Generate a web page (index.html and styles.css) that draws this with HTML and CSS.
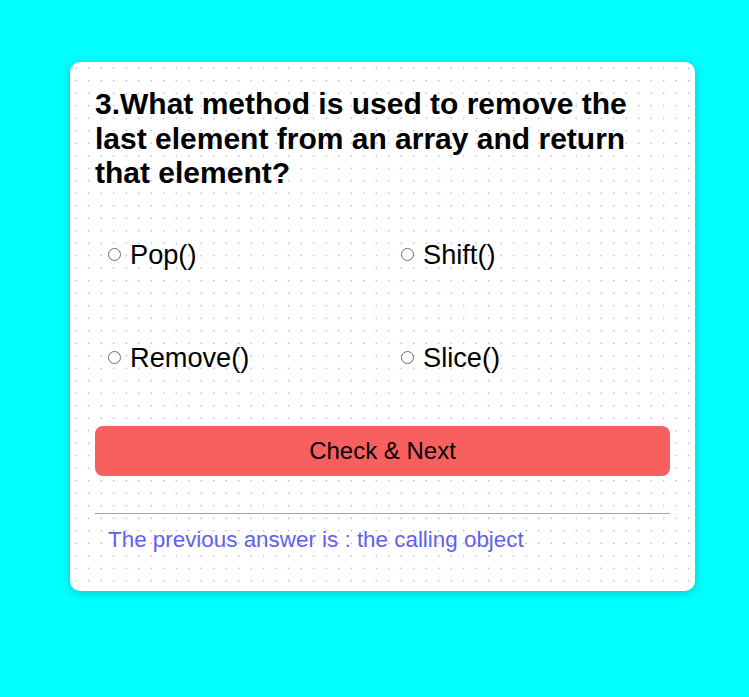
FILE: index.html
```html
<!DOCTYPE html>
<html lang="en">
<head>
<meta charset="utf-8">
<title>Quiz</title>
<link rel="stylesheet" href="styles.css">
</head>
<body>
<div class="page">
  <div class="card">
    <h2 class="question">3.What method is used to remove the last element from an array and return that element?</h2>
    <ul class="options">
      <li class="option"><input type="radio" name="answer" id="a"><label for="a">Pop()</label></li>
      <li class="option"><input type="radio" name="answer" id="b"><label for="b">Shift()</label></li>
      <li class="option"><input type="radio" name="answer" id="c"><label for="c">Remove()</label></li>
      <li class="option"><input type="radio" name="answer" id="d"><label for="d">Slice()</label></li>
    </ul>
    <button class="next">Check &amp; Next</button>
    <hr class="divider">
    <p class="previous">The previous answer is : the calling object</p>
  </div>
</div>
</body>
</html>
```

FILE: styles.css
```css
html, body {
  margin: 0;
  padding: 0;
}
body {
  background: #00ffff;
  font-family: "Liberation Sans", Arial, sans-serif;
  min-height: 697px;
}
.page {
  padding: 62px 0 0 70px;
}
.card {
  box-sizing: border-box;
  width: 625px;
  height: 529px;
  padding: 25px;
  border-radius: 10px;
  background-color: #ffffff;
  background-image: radial-gradient(circle, #8585f7 0.6px, transparent 1px);
  background-size: 12.5px 12.5px;
  box-shadow: 0 2px 10px rgba(0, 0, 0, 0.2);
}
.question {
  margin: 0;
  font-size: 30px;
  font-weight: bold;
  line-height: 34.5px;
  color: #000;
}
.options {
  list-style: none;
  margin: 48px 0 0;
  padding: 0;
  display: grid;
  grid-template-columns: 1fr 1fr;
  column-gap: 11px;
  row-gap: 72px;
}
.option {
  display: flex;
  align-items: center;
  gap: 9px;
  padding-left: 13px;
  font-size: 27.2px;
  line-height: 31px;
}
.option input {
  appearance: none;
  -webkit-appearance: none;
  box-sizing: border-box;
  margin: 0;
  width: 13px;
  height: 13px;
  border: 1.5px solid #6e6e6e;
  border-radius: 50%;
  background: #fff;
}
.next {
  display: block;
  width: 100%;
  height: 50px;
  margin-top: 53px;
  border: none;
  border-radius: 8px;
  background: #f85f5f;
  color: #000;
  font-family: "Liberation Sans", Arial, sans-serif;
  font-size: 24px;
}
.divider {
  margin: 37px 0 0;
  border: none;
  border-top: 1px solid #a8a8a8;
}
.previous {
  margin: 13px 0 0;
  padding-left: 13px;
  font-size: 22.4px;
  color: #5f5ff0;
}
```
